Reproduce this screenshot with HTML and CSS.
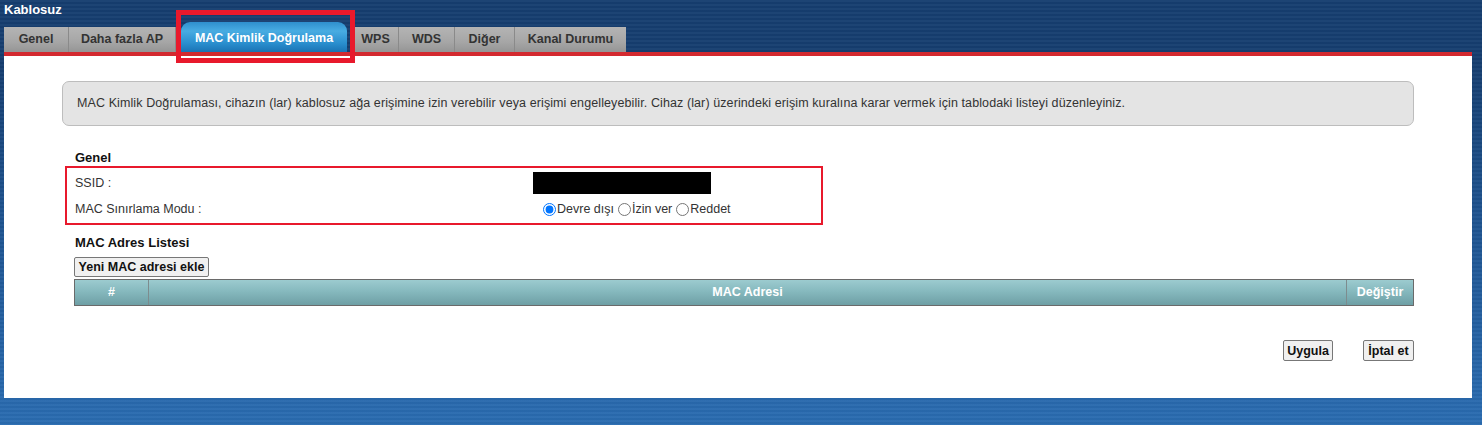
FILE: index.html
```html
<!DOCTYPE html>
<html lang="tr">
<head>
<meta charset="utf-8">
<title>Kablosuz</title>
<link rel="stylesheet" href="styles.css">
</head>
<body>
<div class="title">Kablosuz</div>
<div class="tabs">
  <div class="tab">Genel</div>
  <div class="tab tab-ap">Daha fazla AP</div>
  <div class="tab active">MAC Kimlik Doğrulama</div>
  <div class="tab tab-wps">WPS</div>
  <div class="tab tab-wds">WDS</div>
  <div class="tab tab-diger">Diğer</div>
  <div class="tab tab-kanal">Kanal Durumu</div>
</div>
<div class="redline"></div>
<div class="panel">
  <div class="info">MAC Kimlik Doğrulaması, cihazın (lar) kablosuz ağa erişimine izin verebilir veya erişimi engelleyebilir. Cihaz (lar) üzerindeki erişim kuralına karar vermek için tablodaki listeyi düzenleyiniz.</div>
  <div class="section">
    <div class="heading">Genel</div>
    <div class="row">
      <div class="label">SSID :</div>
      <div class="value"><span class="masked"></span></div>
    </div>
    <div class="row">
      <div class="label">MAC Sınırlama Modu :</div>
      <div class="value radios">
        <label class="radio"><input type="radio" name="mode" checked>Devre dışı</label>
        <label class="radio"><input type="radio" name="mode">İzin ver</label>
        <label class="radio"><input type="radio" name="mode">Reddet</label>
      </div>
    </div>
    <div class="heading heading-list">MAC Adres Listesi</div>
    <button class="btn btn-add">Yeni MAC adresi ekle</button>
    <div class="table-head">
      <div class="th th-num">#</div>
      <div class="th th-mac">MAC Adresi</div>
      <div class="th th-edit">Değiştir</div>
    </div>
    <div class="actions">
      <button class="btn btn-apply">Uygula</button>
      <button class="btn btn-cancel">İptal et</button>
    </div>
  </div>
</div>
<div class="mark mark-tab"></div>
<div class="mark mark-genel"></div>
</body>
</html>
```

FILE: styles.css
```css
html, body {
  margin: 0;
  padding: 0;
}
body {
  width: 1482px;
  height: 425px;
  overflow: hidden;
  position: relative;
  font-family: "Liberation Sans", Arial, sans-serif;
  background:
    repeating-linear-gradient(to bottom, rgba(255,255,255,0.03) 0 2px, rgba(0,0,0,0.03) 2px 4px),
    linear-gradient(to bottom, #163e70 0, #163e70 60px, #1f5592 230px, #2a6cb1 425px);
}
.title {
  height: 20px;
  padding: 2px 0 0 4px;
  box-sizing: border-box;
  color: #fff;
  font-weight: bold;
  font-size: 13px;
  line-height: 16px;
}
.tabs {
  display: flex;
  align-items: flex-end;
  height: 32px;
  margin-left: 4px;
}
.tab {
  height: 25px;
  line-height: 25px;
  box-sizing: border-box;
  background: linear-gradient(to bottom, #b4b4b4 0%, #a6a6a6 60%, #959595 100%);
  border-right: 1px solid #8a8a8a;
  color: #333;
  font-weight: bold;
  font-size: 12.5px;
  text-align: center;
  width: 65px;
}
.tab-ap { width: 107px; }
.tab.active {
  width: 166px;
  height: 30px;
  line-height: 32px;
  margin: 0 6px 0 5px;
  border: none;
  border-radius: 9px 9px 0 0;
  color: #fff;
  background: linear-gradient(to bottom, #2f8fcd 0%, #48ace2 30%, #2a8fcf 70%, #1a73b4 100%);
}
.tab-wps { width: 46px; }
.tab-wds { width: 56px; }
.tab-diger { width: 60px; }
.tab-kanal { width: 111px; border-right: none; }
.redline {
  margin-left: 4px;
  width: 1468px;
  height: 4px;
  background: #d3292f;
}
.panel {
  margin-left: 4px;
  width: 1468px;
  height: 342px;
  box-sizing: border-box;
  background: #fff;
  padding: 25px 58px 0 58px;
  color: #333;
  font-size: 12.5px;
}
.info {
  height: 45px;
  box-sizing: border-box;
  background: #e4e4e4;
  border: 1px solid #bdbdbd;
  border-radius: 7px;
  padding: 0 0 0 14px;
  line-height: 43px;
  font-size: 12.5px;
  letter-spacing: 0.1px;
  color: #333;
  white-space: nowrap;
}
.section {
  padding: 24px 0 0 12px;
}
.heading {
  font-weight: bold;
  font-size: 13px;
  color: #111;
  height: 16px;
  line-height: 16px;
  padding-left: 1px;
  margin-bottom: 4px;
}
.row {
  display: flex;
  align-items: center;
  height: 26px;
}
.label {
  width: 458px;
  padding-left: 1px;
  color: #333;
}
.value {
  display: flex;
  align-items: center;
}
.masked {
  display: block;
  width: 178px;
  height: 22px;
  background: #000;
}
.radios {
  padding-left: 8px;
  color: #333;
}
.radio {
  display: flex;
  align-items: center;
  margin-right: 2px;
}
.radio input {
  margin: 0 1px 0 2px;
  width: 13px;
  height: 13px;
}
.heading-list {
  margin-top: 13px;
  margin-bottom: 0;
}
.btn {
  font-family: "Liberation Sans", Arial, sans-serif;
  font-size: 12.5px;
  font-weight: bold;
  color: #111;
  background: #f0f0f0;
  border: 1px solid #777;
  border-radius: 2px;
  height: 21px;
  padding: 0;
  margin: 0;
}
.btn-add {
  display: block;
  margin-top: 6px;
  width: 135px;
  height: 20px;
}
.btn-apply { width: 50px; }
.btn-cancel { width: 51px; }
.table-head {
  display: flex;
  margin-top: 2px;
  height: 27px;
  box-sizing: border-box;
  border: 1px solid #6a6a6a;
  background: linear-gradient(to bottom, #9ccbcf 0%, #86b9be 45%, #6e9fa5 100%);
  color: #fff;
  font-weight: bold;
  font-size: 12.5px;
}
.th {
  line-height: 25px;
  text-align: center;
}
.th-num { width: 73px; border-right: 1px solid #7d8c8e; }
.th-mac { flex: 1; border-right: 1px solid #7d8c8e; }
.th-edit { width: 66px; }
.actions {
  display: flex;
  justify-content: flex-end;
  gap: 30px;
  margin-top: 34px;
}
.mark {
  position: absolute;
  box-sizing: border-box;
}
.mark-tab {
  left: 176px;
  top: 10px;
  width: 179px;
  height: 53px;
  border: 5px solid #e8192c;
}
.mark-genel {
  left: 65px;
  top: 166px;
  width: 758px;
  height: 59px;
  border: 2.5px solid #e8192c;
}
```
